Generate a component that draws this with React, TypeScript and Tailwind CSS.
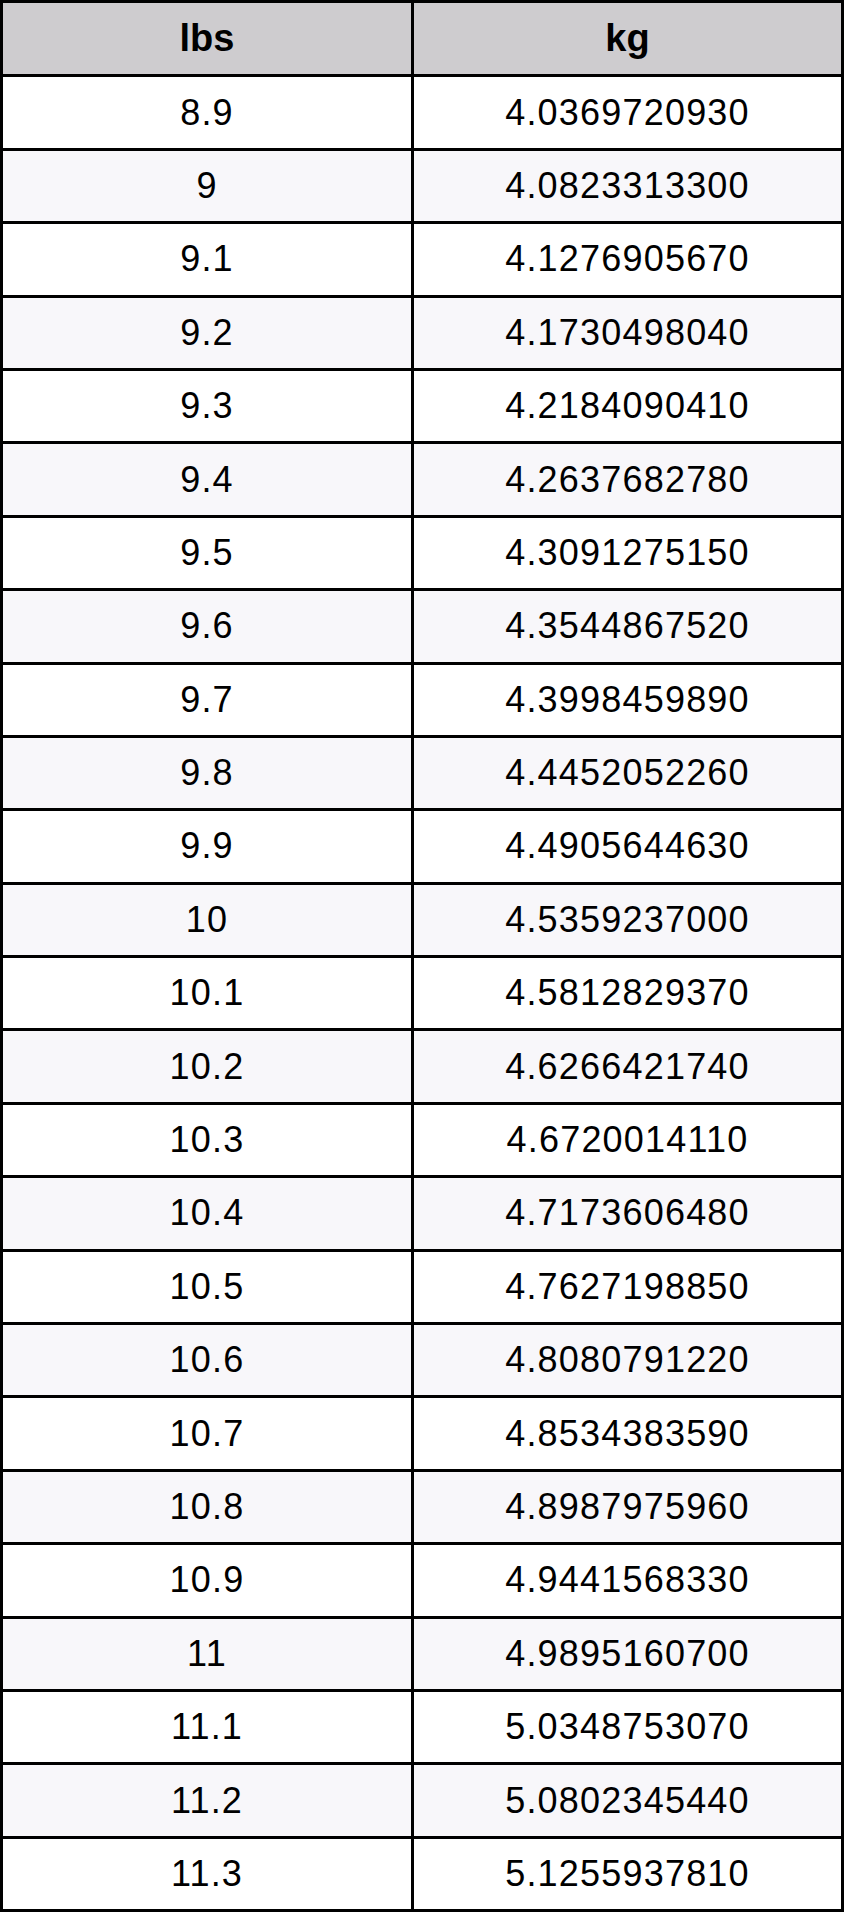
import React from 'react';

const rows: [string, string][] = [
    ['8.9', '4.0369720930'],
    ['9', '4.0823313300'],
    ['9.1', '4.1276905670'],
    ['9.2', '4.1730498040'],
    ['9.3', '4.2184090410'],
    ['9.4', '4.2637682780'],
    ['9.5', '4.3091275150'],
    ['9.6', '4.3544867520'],
    ['9.7', '4.3998459890'],
    ['9.8', '4.4452052260'],
    ['9.9', '4.4905644630'],
    ['10', '4.5359237000'],
    ['10.1', '4.5812829370'],
    ['10.2', '4.6266421740'],
    ['10.3', '4.6720014110'],
    ['10.4', '4.7173606480'],
    ['10.5', '4.7627198850'],
    ['10.6', '4.8080791220'],
    ['10.7', '4.8534383590'],
    ['10.8', '4.8987975960'],
    ['10.9', '4.9441568330'],
    ['11', '4.9895160700'],
    ['11.1', '5.0348753070'],
    ['11.2', '5.0802345440'],
    ['11.3', '5.1255937810'],
];

const App = () => {
    return (
        <div className="w-[844px] bg-white font-['Liberation_Sans',Arial,sans-serif] text-black">
            <div className="border-[3px] border-black">
                <div className="grid grid-cols-[408px_1fr] h-[71.4px] bg-[#cecccf] text-[38px] font-bold">
                    <div className="flex items-center justify-center">lbs</div>
                    <div className="flex items-center justify-center border-l-[3px] border-black">kg</div>
                </div>
                {rows.map(([lbs, kg], i) => (
                    <div
                        key={lbs}
                        className={`grid grid-cols-[408px_1fr] h-[73.4px] border-t-[3px] border-black text-[36px] tracking-[1.2px] ${i % 2 === 1 ? 'bg-[#f8f7fa]' : 'bg-white'}`}
                    >
                        <div className="flex items-center justify-center">{lbs}</div>
                        <div className="flex items-center justify-center border-l-[3px] border-black">{kg}</div>
                    </div>
                ))}
            </div>
        </div>
    );
};

export default App;
